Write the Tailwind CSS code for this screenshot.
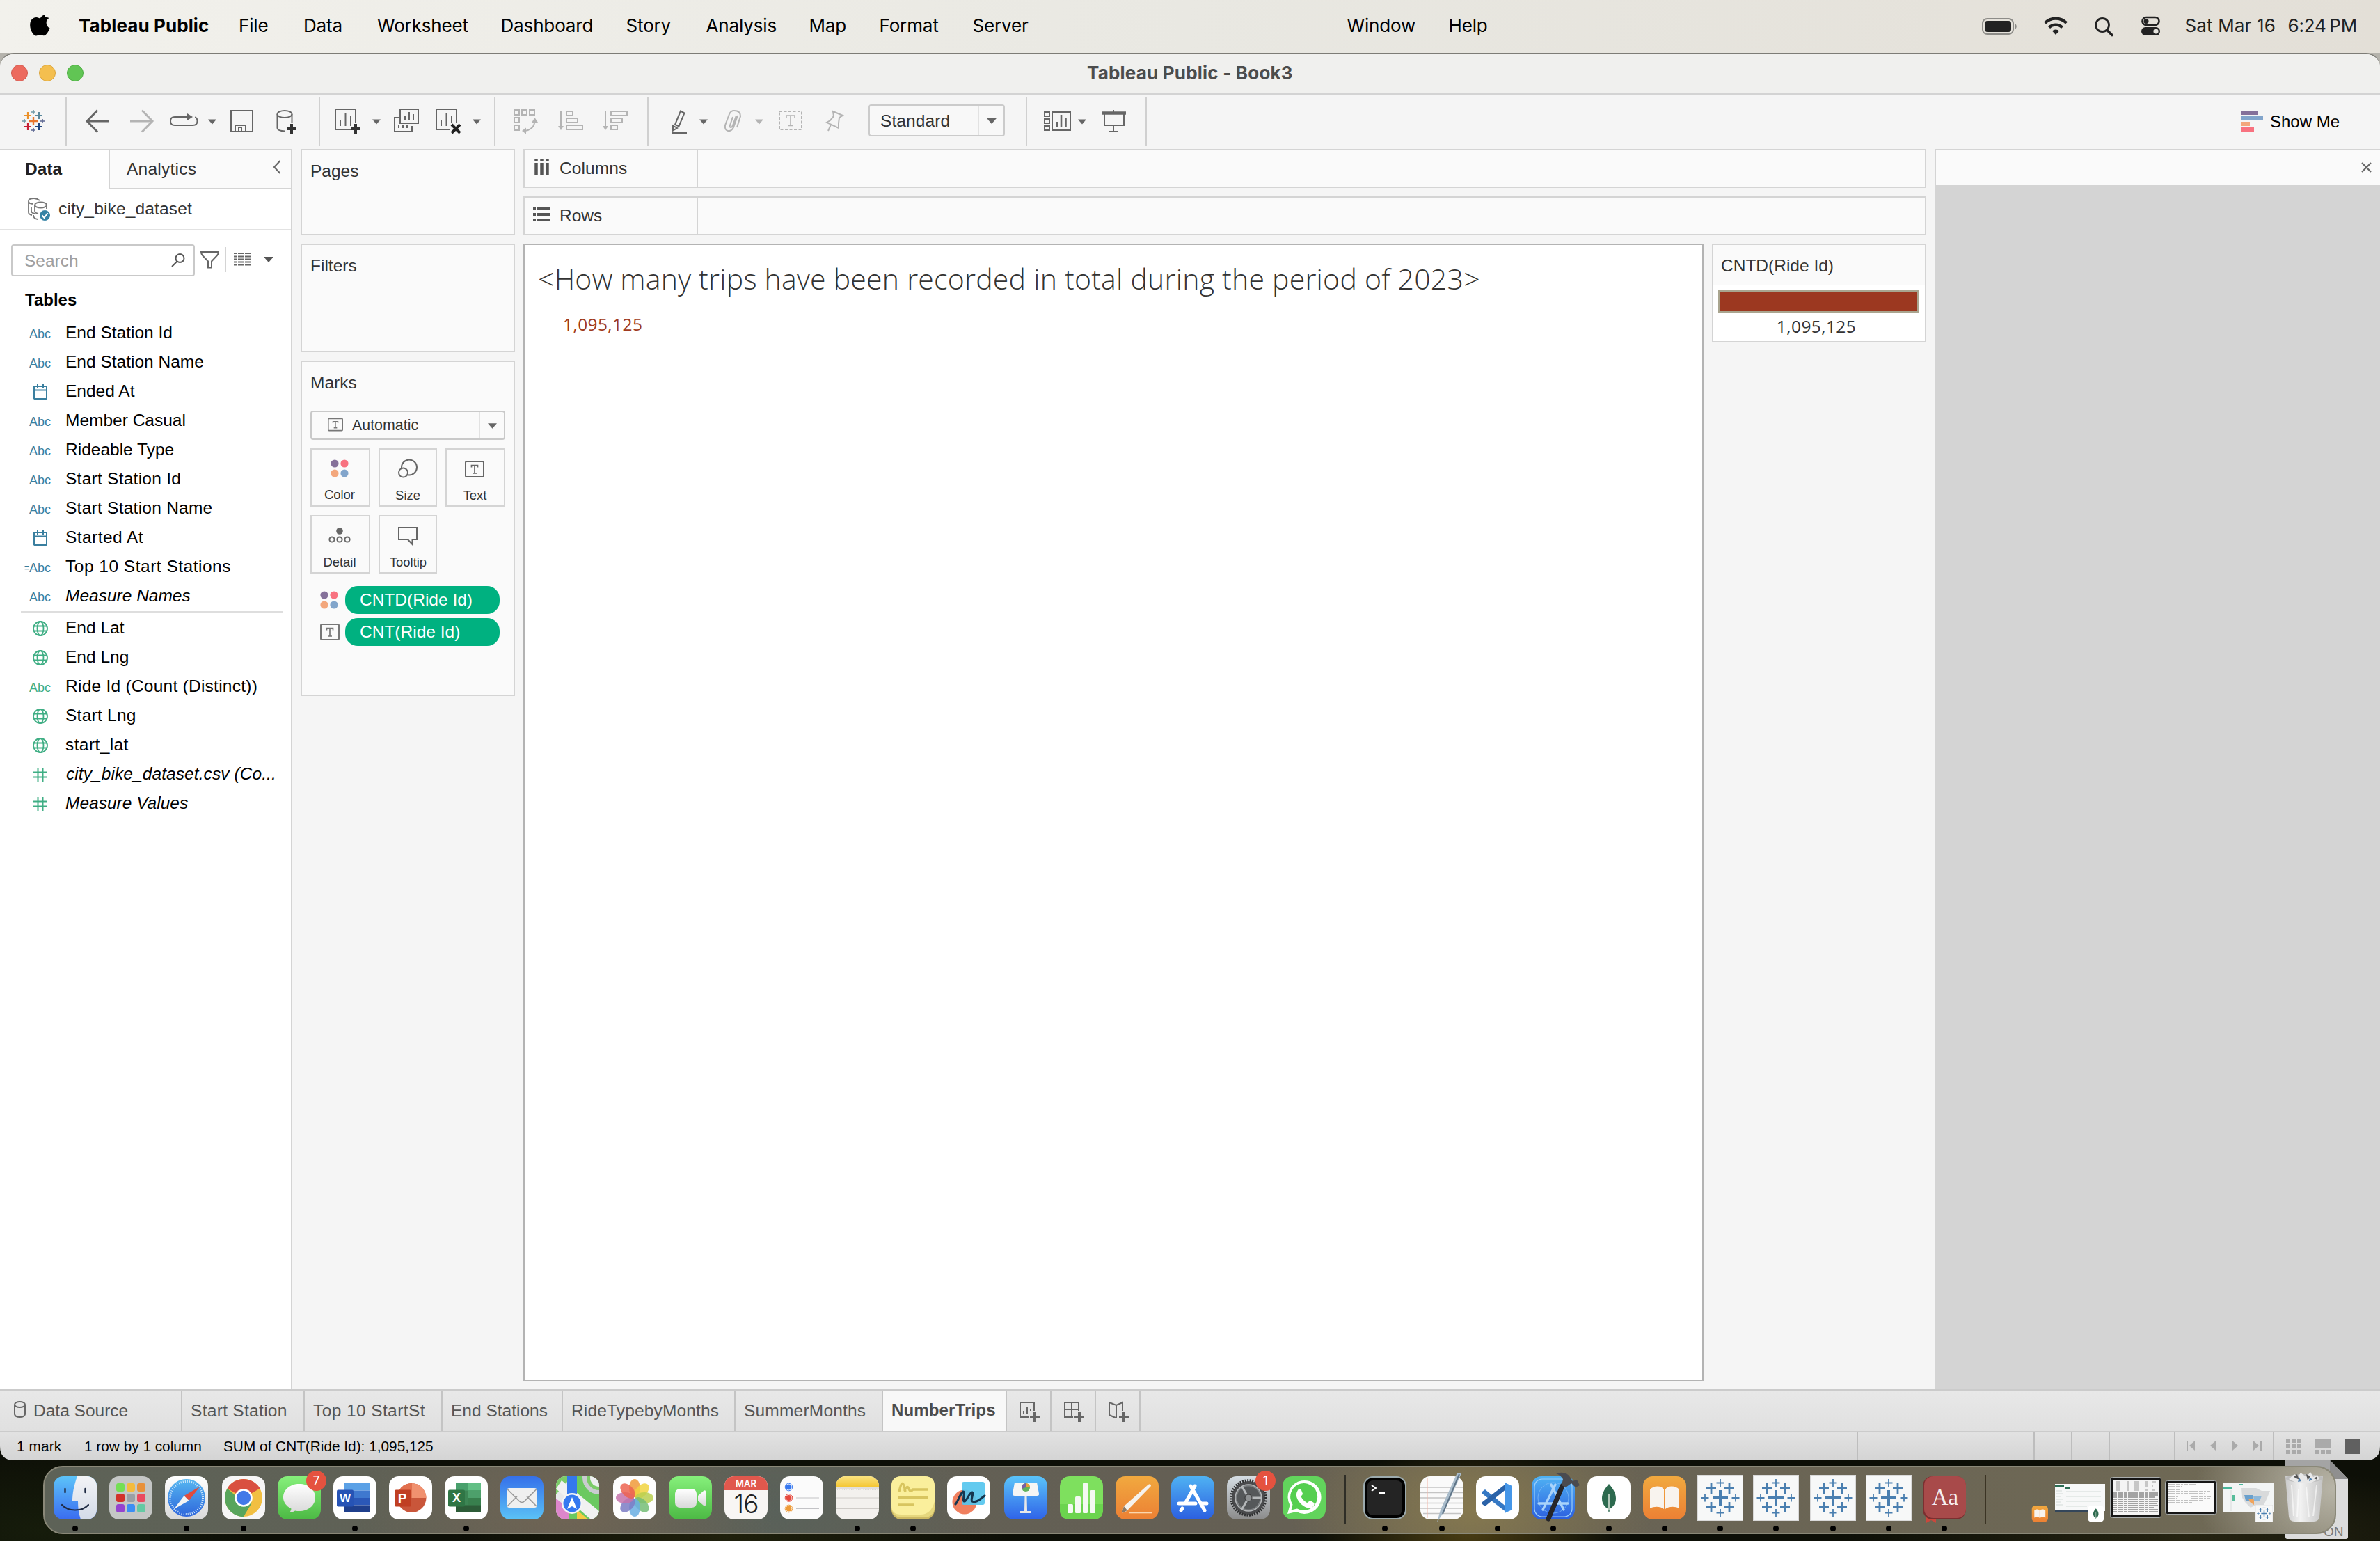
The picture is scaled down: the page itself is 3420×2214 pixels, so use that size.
<!DOCTYPE html>
<html lang="en">
<head>
<meta charset="utf-8">
<title>Tableau Public - Book3</title>
<script src="https://cdn.jsdelivr.net/npm/@tailwindcss/browser@4"></script>
</head>
<body class="w-[3420px] h-[2214px] overflow-hidden bg-[#0b0d06] font-['Liberation_Sans',sans-serif] text-[24.5px] text-[#333333]">

<!-- Shared symbols -->
<svg class="absolute w-0 h-0" aria-hidden="true">
  <defs>
    <linearGradient id="gFinder" x1="0" y1="0" x2="0" y2="1"><stop offset="0" stop-color="#5cc3f9"/><stop offset="1" stop-color="#3a6cf0"/></linearGradient>
    <linearGradient id="gFinder2" x1="0" y1="0" x2="0" y2="1"><stop offset="0" stop-color="#f2f3f6"/><stop offset="1" stop-color="#d3dbe8"/></linearGradient>
    <linearGradient id="gGreen" x1="0" y1="0" x2="0" y2="1"><stop offset="0" stop-color="#86f07b"/><stop offset="1" stop-color="#4cb944"/></linearGradient>
    <linearGradient id="gBlue" x1="0" y1="0" x2="0" y2="1"><stop offset="0" stop-color="#4fb2f3"/><stop offset="1" stop-color="#2c5fe0"/></linearGradient>
    <linearGradient id="gMail" x1="0" y1="0" x2="0" y2="1"><stop offset="0" stop-color="#3570ea"/><stop offset="1" stop-color="#5bc2f6"/></linearGradient>
    <linearGradient id="gKey" x1="0" y1="0" x2="0" y2="1"><stop offset="0" stop-color="#5ac4fa"/><stop offset="1" stop-color="#2f63e8"/></linearGradient>
    <linearGradient id="gOrange" x1="0" y1="0" x2="0" y2="1"><stop offset="0" stop-color="#f1a93f"/><stop offset="1" stop-color="#ec8034"/></linearGradient>
    <linearGradient id="gGrey" x1="0" y1="0" x2="0" y2="1"><stop offset="0" stop-color="#d5dde3"/><stop offset="1" stop-color="#8b8b8b"/></linearGradient>
    <linearGradient id="gWhite" x1="0" y1="0" x2="0" y2="1"><stop offset="0" stop-color="#ffffff"/><stop offset="1" stop-color="#d9d9d9"/></linearGradient>
    <linearGradient id="gSafari" x1="0" y1="0" x2="0" y2="1"><stop offset="0" stop-color="#55b6f0"/><stop offset="1" stop-color="#2e66dc"/></linearGradient>
    <linearGradient id="gYellow" x1="0" y1="0" x2="0" y2="1"><stop offset="0" stop-color="#fae380"/><stop offset="1" stop-color="#f4c52f"/></linearGradient>
    <linearGradient id="gTrash" x1="0" y1="0" x2="1" y2="0"><stop offset="0" stop-color="#c9c9c9"/><stop offset=".4" stop-color="#f2f2f2"/><stop offset="1" stop-color="#c4c4c4"/></linearGradient>
    <clipPath id="tile"><rect width="62" height="62" rx="14"/></clipPath>
  </defs>
  <symbol id="tri" viewBox="0 0 12 7"><path d="M0 0h12L6 7z" fill="currentColor"/></symbol>
  <symbol id="calendar" viewBox="0 0 22 22"><path d="M2 3h18v17.500a1 1 0 0 1-1 .5H3a1 1 0 0 1-1-.5zM2 8.500h18M7 0v6M15 0v6" fill="none" stroke="#3a7f9f" stroke-width="2"/></symbol>
  <symbol id="globe" viewBox="0 0 22 22"><g fill="none" stroke="#3fae84" stroke-width="1.800"><circle cx="11" cy="11" r="10"/><ellipse cx="11" cy="11" rx="4.500" ry="10"/><path d="M2 7.500h18M2 14.500h18"/></g></symbol>
  <symbol id="hash" viewBox="0 0 20 20"><path d="M6.500 0v20M13.500 0v20M0 6.500h20M0 13.500h20" fill="none" stroke="#3fae84" stroke-width="2"/></symbol>
  <symbol id="tbox" viewBox="0 0 28 24"><rect x="1" y="1" width="26" height="22" rx="1.500" fill="none" stroke="currentColor" stroke-width="2"/><path d="M9.500 9.500V6.500h9v3M14 6.500v11.500M11 18h6" fill="none" stroke="currentColor" stroke-width="1.700"/></symbol>
  <symbol id="dots4" viewBox="0 0 26 26"><circle cx="6" cy="6" r="5.600" fill="#85719a"/><circle cx="20" cy="6" r="5.600" fill="#f87280"/><circle cx="6" cy="20" r="5.600" fill="#f3a77c"/><circle cx="20" cy="20" r="5.600" fill="#82a5cb"/></symbol>
  <symbol id="tabtile" viewBox="0 0 66 66"><rect width="66" height="66" fill="#d9d9d9"/><rect x="1" y="1" width="64" height="64" fill="#f7f8f8"/>
    <g fill="none" stroke="#4a7fb0"><path d="M33 22v22M22 33h22" stroke-width="4"/><path d="M20 12v15M13 19.500h14M46 12v15M39 19.500h14M20 39v15M13 46.500h14M46 39v15M39 46.500h14" stroke-width="2.800"/><path d="M33 6v11M27.500 11.500h11M33 49v11M27.500 54.500h11M11 27.500v11M5.500 33h11M55 27.500v11M49.500 33h11" stroke-width="1.800"/></g></symbol>
  <symbol id="leaf" viewBox="0 0 62 62"><rect width="62" height="62" rx="14" fill="#fff"/><path d="M31 11c-8 9-10 15-10 21 0 7 4 12 9 15l.5 5h1l.5-5c5-3 9-8 9-15 0-6-2-12-10-21z" fill="#2d6a4f"/><path d="M31 25v24" stroke="#dfe8dd" stroke-width="1.500"/></symbol>
  <symbol id="books" viewBox="0 0 62 62"><rect width="62" height="62" rx="14" fill="url(#gOrange)"/><path d="M30 19c-3-6-15-6-20 0v27c6-3 15-3 20 1zM32 19c3-6 15-6 20 0v27c-6-3-15-3-20 1z" fill="#f8f3ee"/></symbol>
</svg>

<div class="flex flex-col w-[3420px] h-[2098px]">

  <!-- macOS menu bar -->
  <header class="flex h-[76px] shrink-0 items-center bg-linear-to-r from-[#f2f1ec] via-[#e9e8e2] to-[#e3dfd7] font-['Inter',sans-serif] text-[26px] tracking-[-0.15px] text-black leading-[72px] whitespace-nowrap">
    <svg class="w-[113px] h-[76px] shrink-0" viewBox="0 0 113 76"><path d="M66 26.800c-2.600 1.600-4 4-3.900 7 .1 3.400 2 6 5 7.400-.8 2.500-2 4.700-3.500 6.900-1.600 2.300-3 4-5.300 4-2.200 0-2.900-1.300-5.500-1.300s-3.400 1.300-5.500 1.400c-2.200.1-3.900-2.200-5.400-4.500-3.600-5.500-4.600-14.300-.9-18.600 1.900-2.300 4.300-3.400 6.700-3.400 2.500 0 4.100 1.400 5.500 1.400 1.400 0 3.600-1.600 6.500-1.500 2.400 0 4.900.5 6.300 1.200z" transform="translate(4.500 -.8)"/><path d="M64.500 21.500c.3 3.800-3 7.600-6.800 7.500-.5-3.700 3-7.300 6.800-7.500z"/></svg>
    <div class="w-[230px] pb-[3px] font-bold tracking-[0.1px]">Tableau Public</div>
    <div class="w-[93px] pb-[3px]">File</div>
    <div class="w-[106px] pb-[3px]">Data</div>
    <div class="w-[177.5px] pb-[3px]">Worksheet</div>
    <div class="w-[180px] pb-[3px]">Dashboard</div>
    <div class="w-[115px] pb-[3px]">Story</div>
    <div class="w-[148px] pb-[3px]">Analysis</div>
    <div class="w-[101px] pb-[3px]">Map</div>
    <div class="w-[134px] pb-[3px]">Format</div>
    <div class="w-[538px] pb-[3px]">Server</div>
    <div class="w-[146px] pb-[3px]">Window</div>
    <div class="w-[758px] pb-[3px]">Help</div>
    <svg class="w-[300px] h-[76px] shrink-0" viewBox="2840 0 300 76">
      <rect x="2849" y="27" width="44" height="22" rx="6.500" fill="none" stroke="#8d8c88" stroke-width="2"/><rect x="2852" y="30" width="38" height="16" rx="4" fill="#222"/><path d="M2896 34q3.500 4 0 8z" fill="#8d8c88"/>
      <g fill="none" stroke="#222" stroke-width="4.400"><path d="M2938.500 33a22 22 0 0 1 31 0M2944.500 39.500a13.500 13.500 0 0 1 19 0"/></g><path d="M2954 50l-5-5.500a7.200 7.200 0 0 1 10 0z" fill="#222"/>
      <circle cx="3021" cy="36" r="9.500" fill="none" stroke="#222" stroke-width="2.800"/><path d="M3028 43.500l7 7" stroke="#222" stroke-width="3.600" stroke-linecap="round"/>
      <rect x="3078.500" y="25" width="24" height="11" rx="5.500" fill="none" stroke="#222" stroke-width="2.600"/><circle cx="3084" cy="30.500" r="3.500" fill="#222"/><rect x="3077" y="39" width="27" height="12" rx="6" fill="#222"/><circle cx="3098" cy="45" r="3.600" fill="#e6e4de"/>
    </svg>
    <div class="w-[148px] pb-[3px] tracking-[0.15px] text-[#222]">Sat Mar 16</div>
    <div class="pb-[3px] text-[#222]">6:24&#8201;PM</div>
  </header>

  <!-- Application window -->
  <main class="flex flex-col h-[2022px] bg-[#b5b3ac]">
    <div class="flex flex-col h-[2022px] rounded-t-[20px] border-t-2 border-[#7d7c76] bg-[#f5f5f5] overflow-hidden">

      <div class="flex h-[58px] shrink-0 items-center border-b-2 border-[#d3d3d3] bg-[#f0f0ee]">
        <div class="flex w-[1562px] gap-4 pl-4 pb-0.5">
          <div class="size-6 rounded-full bg-[#ec6a5e] border border-[#d35b50]"></div>
          <div class="size-6 rounded-full bg-[#f4bf4f] border border-[#dba53d]"></div>
          <div class="size-6 rounded-full bg-[#61c554] border border-[#4fae43]"></div>
        </div>
        <h1 class="pb-0.5 font-['Inter',sans-serif] text-[26px] font-bold tracking-[0.2px] leading-[54px] text-[#4c4c4c]">Tableau Public - Book3</h1>
      </div>

      <!-- Toolbar -->
      <div class="flex h-[78px] shrink-0 items-center">
        <svg class="w-[94px] h-[78px]" viewBox="0 136 94 78" fill="none">
          <path d="M48 168v12M42 174h12" stroke="#e8762c" stroke-width="2.400"/>
          <path d="M40 161v10M35 166h10" stroke="#eb9129" stroke-width="2.200"/><path d="M56 161v10M51 166h10" stroke="#59879b" stroke-width="2.200"/>
          <path d="M40 177v10M35 182h10" stroke="#c72035" stroke-width="2.200"/><path d="M56 177v10M51 182h10" stroke="#1f447e" stroke-width="2.200"/>
          <path d="M48 158v6M45 161h6M35 171v6M32 174h6" stroke="#7099a6" stroke-width="1.600"/><path d="M61 171v6M58 174h6M48 184v6M45 187h6" stroke="#5b6591" stroke-width="1.600"/>
        </svg>
        <div class="w-0.5 h-[70px] bg-[#d0d0d0]"></div>
        <svg class="w-[362px] h-[78px]" viewBox="96 136 362 78" fill="none" stroke="#666" stroke-width="2">
          <path d="M140 158.500L125 174l15 15.500M125 174h32" stroke-width="3"/>
          <path d="M204 158.500L219 174l-15 15.500M219 174h-32" stroke="#b4b4b4" stroke-width="3"/>
          <path d="M268 168h-17q-6 0-6 6t6 6h26q6.500 0 6.500-6 0-5-3.500-5.500"/><path d="M269 163l8 5-8 5z" fill="#666" stroke="none"/>
          <path d="M299 171.500h12l-6 7z" fill="#666" stroke="none"/>
          <path d="M332 159h31v30h-31zM338 189v-9h15v9M343 189v-6h4v6"/>
          <ellipse cx="409" cy="164" rx="10.500" ry="5"/><path d="M398.500 164v20q0 4 11 4.500M419.500 164v12"/><path d="M419 178v14M412 185h14" stroke="#333" stroke-width="4"/>
        </svg>
        <div class="w-0.5 h-[70px] bg-[#d0d0d0]"></div>
        <svg class="w-[250px] h-[78px]" viewBox="460 136 250 78" fill="none" stroke="#666" stroke-width="2">
          <path d="M505 186h-23v-29h29v20M489 181v-8M496.500 181v-18M504 181v-14"/><path d="M511 178v14M504 185h14" stroke="#333" stroke-width="4"/>
          <path d="M535 171.500h12l-6 7z" fill="#666" stroke="none"/>
          <path d="M575 157h26v20h-26zM582 172v-5M588 172v-11M594 172v-8M574 169h-7v20h25v-8M573 184v-4M579 184v-4M585 184v-4"/>
          <path d="M647 186h-20v-29h29v19M634 181v-8M641.500 181v-18M649 176v-9"/><path d="M649 179l12 12M661 179l-12 12" stroke="#222" stroke-width="4"/>
          <path d="M679 171.500h12l-6 7z" fill="#666" stroke="none"/>
        </svg>
        <div class="w-0.5 h-[70px] bg-[#d0d0d0]"></div>
        <svg class="w-[218px] h-[78px]" viewBox="712 136 218 78" fill="none" stroke="#b4b4b4" stroke-width="2">
          <path d="M739 158h7v7h-7zM750 158h7v7h-7zM761 158h7v7h-7zM739 169h7v7h-7zM739 180h7v7h-7z"/><path d="M768.500 174q-1 12-14 14"/><path d="M768.500 169l4.500 7h-9zM750 188l6-4.500v9z" fill="#b4b4b4" stroke="none"/>
          <path d="M806 159v24M814 160h9v6h-9zM814 170h16v6h-16zM814 180h23v6h-23z"/><path d="M802 181h8l-4 6z" fill="#b4b4b4" stroke="none"/>
          <path d="M870 159v24M878 160h23v6h-23zM878 170h16v6h-16zM878 180h9v6h-9z"/><path d="M866 181h8l-4 6z" fill="#b4b4b4" stroke="none"/>
        </svg>
        <div class="w-0.5 h-[70px] bg-[#d0d0d0]"></div>
        <svg class="w-[316px] h-[78px]" viewBox="932 136 316 78" fill="none" stroke="#b4b4b4" stroke-width="2">
          <path d="M978 159.500l5.500 3-8 19-5.500-2.500zM967 180.500l6 3.500-6 3.500z" stroke="#666"/><path d="M965 190.500h22" stroke="#666" stroke-width="3"/>
          <path d="M1005 171.500h12l-6 7z" fill="#666" stroke="none"/>
          <path d="M1060 166l-6 17q-3 6-8 5t-4-8l6-16q2-5 7-5 9 0 9 8l-5 16M1053 168l-4 12q-1 3 1 3t3-3l5-14"/>
          <path d="M1085 171.500h12l-6 7z" fill="#b4b4b4" stroke="none"/>
          <path d="M1120 160h32v26h-32z" stroke-dasharray="4 2.500"/><path d="M1130 169v-3h12v3M1136 166v14M1132.500 180.500h7" stroke-width="1.600"/>
          <path d="M1197 160l14 6-5 3-1 8 0 7-17-8 5-3 5-6zM1194 179l-4 9"/>
        </svg>
        <div class="flex w-[196px] h-[46px] -mt-[4px] rounded-[4px] border-2 border-[#cbcbcb] bg-[#f8f8f8]">
          <div class="w-[157px] pl-[15px] leading-[43px] tracking-[0.1px] border-r-2 border-[#e2e2e2]">Standard</div>
          <div class="flex grow items-center justify-center text-[#666]"><svg class="w-3.5 h-2 mt-0.5"><use href="#tri" width="14" height="8"/></svg></div>
        </div>
        <div class="w-[30px]"></div>
        <div class="w-0.5 h-[70px] bg-[#d0d0d0]"></div>
        <svg class="w-[170px] h-[78px]" viewBox="1476 136 170 78" fill="none" stroke="#666" stroke-width="2">
          <path d="M1501 161h7v6h-7zM1501 171h7v6h-7zM1501 181h7v6h-7zM1512 161h26v26h-26z"/><path d="M1519 183v-8M1525 183v-18M1531.500 183v-13" stroke-width="2.600"/>
          <path d="M1549 171.500h12l-6 7z" fill="#666" stroke="none"/>
          <path d="M1583 162.500h35" stroke-width="4.500"/><path d="M1587 164v16h28v-16M1600 158v3M1600 180v8M1593 189h14"/>
        </svg>
        <div class="w-0.5 h-[70px] bg-[#d0d0d0]"></div>
        <div class="flex grow items-center justify-end gap-[10px] pr-[58px] text-black text-[24px]">
          <div class="flex flex-col gap-0.5 -mt-0.5">
            <div class="w-[25px] h-1.5 bg-[#85719a]"></div>
            <div class="w-8 h-1.5 bg-[#82a5cb]"></div>
            <div class="w-[13px] h-1.5 bg-[#f3a77c]"></div>
            <div class="w-[19px] h-1.5 bg-[#f87280]"></div>
          </div>
          <div class="leading-[34px]">Show Me</div>
        </div>
      </div>

      <!-- Workspace -->
      <div class="flex h-[1782px] shrink-0">

        <!-- Data pane -->
        <aside class="flex flex-col w-[420px] shrink-0 border-r-2 border-t-2 border-[#d4d4d4] bg-white whitespace-nowrap">
          <div class="flex h-[56px] shrink-0">
            <div class="w-[156px] pl-9 font-bold text-[#222] leading-[53px]">Data</div>
            <div class="flex grow items-center justify-between border-l-2 border-b-2 border-[#d4d4d4] bg-[#fafafa] pl-6 pr-[14px]">
              <div class="leading-[52px] tracking-[0.25px]">Analytics</div>
              <svg class="w-3 h-5 -mt-1.5" viewBox="0 0 12 20"><path d="M10.500 1L2 10l8.500 9" fill="none" stroke="#666" stroke-width="2"/></svg>
            </div>
          </div>
          <div class="flex h-[59px] shrink-0 items-center border-b-2 border-[#e2e2e2] pl-10">
            <svg class="w-[44px] h-9" viewBox="40 282 44 36" fill="none" stroke="#777" stroke-width="1.800"><path d="M57 287q-4-3-8-3-8 0-8 4v16q0 3 5 4M41 288q0 4 7 4"/><ellipse cx="58.500" cy="293.500" rx="8.500" ry="4"/><path d="M50 294v8q0 3 5 4M67 294v5M45 296v6q0 3 5 4M48 308q0 5 6 6"/><circle cx="64.500" cy="308.500" r="7.500" fill="#3683a5" stroke="none"/><path d="M60.500 308.500l3 3.500 5-7" stroke="#fff" stroke-width="2"/></svg>
            <div class="leading-[54px] pb-0.5 tracking-[0.15px]">city_bike_dataset</div>
          </div>
          <div class="flex h-[86px] shrink-0 items-center pl-4 pb-0">
            <div class="flex items-center justify-between w-[264px] h-[46px] rounded-[4px] border-2 border-[#c9c9c9] pl-[17px] pr-3">
              <div class="pt-0.5 text-[#a0a0a0]">Search</div>
              <svg class="w-5 h-5" viewBox="0 0 20 20" fill="none" stroke="#555" stroke-width="2"><circle cx="12.500" cy="7" r="6"/><path d="M8.500 11.500L1 19"/></svg>
            </div>
            <svg class="w-[120px] h-[46px]" viewBox="280 352 120 46" fill="none" stroke="#666" stroke-width="2"><path d="M289 363h25q0 3-2 5l-8 8.500v9h-5v-9l-8-8.500q-2-2-2-5z"/><path d="M324 356v36" stroke="#d4d4d4"/><path d="M336 365h24M336 369.500h24M336 373.500h24M336 377.500h24M336 381.500h24" stroke-dasharray="4 2 8 2 8 2"/><path d="M379 370h14l-7 8z" fill="#555" stroke="none"/></svg>
          </div>
          <div class="h-[39px] shrink-0 pl-9 font-bold text-[24px] text-black leading-[28px]">Tables</div>

          <ul class="text-black leading-[44px]">
            <li class="flex h-[42px]"><span class="w-[94px] pl-[42px] text-[18px] text-[#3a7f9f] pt-[2px]">Abc</span>End Station Id</li>
            <li class="flex h-[42px]"><span class="w-[94px] pl-[42px] text-[18px] text-[#3a7f9f] pt-[2px]">Abc</span>End Station Name</li>
            <li class="flex h-[42px]"><span class="flex items-center w-[94px] pl-[47px]"><svg class="size-[22px] mt-1"><use href="#calendar" width="22" height="22"/></svg></span>Ended At</li>
            <li class="flex h-[42px]"><span class="w-[94px] pl-[42px] text-[18px] text-[#3a7f9f] pt-[2px]">Abc</span>Member Casual</li>
            <li class="flex h-[42px]"><span class="w-[94px] pl-[42px] text-[18px] text-[#3a7f9f] pt-[2px]">Abc</span>Rideable Type</li>
            <li class="flex h-[42px] tracking-[0.1px]"><span class="w-[94px] pl-[42px] text-[18px] text-[#3a7f9f] pt-[2px] tracking-normal">Abc</span><span class="tracking-[0.25px]">Start Station Id</span></li>
            <li class="flex h-[42px]"><span class="w-[94px] pl-[42px] text-[18px] text-[#3a7f9f] pt-[2px]">Abc</span><span class="tracking-[0.25px]">Start Station Name</span></li>
            <li class="flex h-[42px]"><span class="flex items-center w-[94px] pl-[47px]"><svg class="size-[22px] mt-1"><use href="#calendar" width="22" height="22"/></svg></span><span class="tracking-[0.45px]">Started At</span></li>
            <li class="flex h-[42px]"><span class="flex w-[94px] pl-[35px] text-[18px] text-[#3a7f9f] pt-[2px]"><span class="w-[7px] text-[12px] font-bold">=</span>Abc</span><span class="tracking-[0.5px]">Top 10 Start Stations</span></li>
            <li class="flex h-[42px] italic"><span class="w-[94px] pl-[42px] text-[18px] not-italic text-[#3a7f9f] pt-[2px]">Abc</span>Measure Names</li>
          </ul>
          <div class="h-0.5 shrink-0 ml-[30px] mr-3 mt-0.5 bg-[#dedede]"></div>
          <ul class="text-black leading-[44px]">
            <li class="flex h-[42px]"><span class="flex items-center w-[94px] pl-[47px]"><svg class="size-[22px] mt-1"><use href="#globe" width="22" height="22"/></svg></span>End Lat</li>
            <li class="flex h-[42px]"><span class="flex items-center w-[94px] pl-[47px]"><svg class="size-[22px] mt-1"><use href="#globe" width="22" height="22"/></svg></span>End Lng</li>
            <li class="flex h-[42px]"><span class="w-[94px] pl-[42px] text-[18px] text-[#3fae84] pt-[2px]">Abc</span><span class="tracking-[0.25px]">Ride Id (Count (Distinct))</span></li>
            <li class="flex h-[42px]"><span class="flex items-center w-[94px] pl-[47px]"><svg class="size-[22px] mt-1"><use href="#globe" width="22" height="22"/></svg></span><span class="tracking-[0.25px]">Start Lng</span></li>
            <li class="flex h-[42px]"><span class="flex items-center w-[94px] pl-[47px]"><svg class="size-[22px] mt-1"><use href="#globe" width="22" height="22"/></svg></span><span class="tracking-[0.4px]">start_lat</span></li>
            <li class="flex h-[42px] italic"><span class="flex items-center w-[94px] pl-[48px]"><svg class="size-5 mt-1"><use href="#hash" width="20" height="20"/></svg></span><span class="pl-px tracking-[0.08px]">city_bike_dataset.csv (Co...</span></li>
            <li class="flex h-[42px] italic"><span class="flex items-center w-[94px] pl-[48px]"><svg class="size-5 mt-1"><use href="#hash" width="20" height="20"/></svg></span>Measure Values</li>
          </ul>
        </aside>

        <!-- Cards -->
        <section class="flex flex-col gap-3 w-[332px] shrink-0 px-3">
          <div class="h-[124px] shrink-0 border-2 border-[#d4d4d4] bg-[#fafafa] pl-3 leading-[60px]">Pages</div>
          <div class="h-[156px] shrink-0 border-2 border-[#d4d4d4] bg-[#fafafa] pl-3 leading-[60px]">Filters</div>
          <div class="flex flex-col h-[482px] shrink-0 border-2 border-[#d4d4d4] bg-[#fafafa] pl-3 pr-3">
            <div class="h-[70px] leading-[60px]">Marks</div>
            <div class="flex h-[42px] rounded-[4px] border-2 border-[#c9c9c9] text-[21.4px]">
              <div class="flex items-center w-[242px] pl-[23px] gap-[13px] border-r-2 border-[#e2e2e2] text-[#777]">
                <svg class="w-[22px] h-5 -mt-0.5"><use href="#tbox" width="22" height="20"/></svg>
                <span class="text-[#333] leading-[38px]">Automatic</span>
              </div>
              <div class="flex grow items-center justify-center text-[#666]"><svg class="w-[13px] h-2 mt-0.5"><use href="#tri" width="13" height="8"/></svg></div>
            </div>
            <div class="grid grid-cols-[86px_84px_86px] grid-rows-[84px_84px] gap-3 mt-3 text-[18.4px] text-[#333] text-center">
              <div class="flex flex-col items-center border-2 border-[#d4d4d4] pt-[14px]"><svg class="size-[26px] -ml-0.5"><use href="#dots4" width="26" height="26"/></svg><span class="leading-[24px] mt-[13px] -ml-0.5">Color</span></div>
              <div class="flex flex-col items-center border-2 border-[#d4d4d4] pt-[13px]"><svg class="w-7 h-7 -ml-px" viewBox="0 0 28 28" fill="none" stroke="#666" stroke-width="2"><circle cx="16" cy="12.500" r="11"/><circle cx="7.500" cy="20" r="6.500" fill="#fafafa"/></svg><span class="leading-[24px] mt-[13px]">Size</span></div>
              <div class="flex flex-col items-center border-2 border-[#d4d4d4] pt-4 text-[#666]"><svg class="w-7 h-6 -ml-0.5"><use href="#tbox" width="28" height="24"/></svg><span class="leading-[24px] mt-[14px] -ml-px text-[#333]">Text</span></div>
              <div class="flex flex-col items-center border-2 border-[#d4d4d4] pt-[14px]"><svg class="w-8 h-[26px] -ml-0.5" viewBox="0 0 32 26" fill="none" stroke="#666" stroke-width="2"><circle cx="16" cy="7" r="4.800" fill="#666" stroke="none"/><circle cx="5" cy="19" r="3.600"/><circle cx="16" cy="19" r="3.600"/><circle cx="27" cy="19" r="3.600"/></svg><span class="leading-[24px] mt-[14px] -ml-0.5">Detail</span></div>
              <div class="flex flex-col items-center border-2 border-[#d4d4d4] pt-[14px]"><svg class="w-7 h-7" viewBox="0 0 28 28" fill="none" stroke="#666" stroke-width="2"><path d="M1 2h26v17h-6.500v7l-6.500-7H1z"/></svg><span class="leading-[24px] mt-[12px] ml-px">Tooltip</span></div>
            </div>
            <div class="flex flex-col gap-1.5 mt-[18px] text-[#777]">
              <div class="flex items-center h-10 pl-[14px]"><svg class="size-[26px] mr-[10px]"><use href="#dots4" width="26" height="26"/></svg><div class="w-[222px] h-10 rounded-[18px] bg-[#00b180] pl-[21px] leading-[39px] text-white">CNTD(Ride Id)</div></div>
              <div class="flex items-center h-10 pl-[14px]"><svg class="w-7 h-6 mr-2"><use href="#tbox" width="28" height="24"/></svg><div class="w-[222px] h-10 rounded-[18px] bg-[#00b180] pl-[21px] leading-[39px] text-white">CNT(Ride Id)</div></div>
            </div>
          </div>
        </section>

        <!-- Shelves and view -->
        <section class="flex flex-col gap-3 w-[2028px] shrink-0 pr-3">
          <div class="flex items-center h-14 shrink-0 border-2 border-[#d4d4d4] bg-[#fafafa]">
            <div class="flex items-center w-[249px] h-full border-r-2 border-[#d4d4d4] pl-3.5">
              <svg class="w-9 h-6 -mt-1" viewBox="0 0 36 24" fill="none" stroke="#555" stroke-width="4.500"><path d="M2.500 0v4M10.500 0v4M18.500 0v4M2.500 6v18M10.500 6v18M18.500 6v18"/></svg>
              <span class="leading-[52px] pb-px tracking-[0.1px]">Columns</span>
            </div>
          </div>
          <div class="flex items-center h-14 shrink-0 border-2 border-[#d4d4d4] bg-[#fafafa]">
            <div class="flex items-center w-[249px] h-full border-r-2 border-[#d4d4d4] pl-3">
              <svg class="w-[38px] h-5 -mt-1" viewBox="0 0 38 20" fill="none" stroke="#555" stroke-width="4"><path d="M0 2h4M0 10h4M0 18h4M6 2h18M6 10h18M6 18h18"/></svg>
              <span class="leading-[52px] pb-px">Rows</span>
            </div>
          </div>
          <div class="flex gap-3 items-start">
            <div class="w-[1696px] h-[1634px] border-2 border-[#b3b3b3] bg-white pl-[19px] pt-[19px]">
              <h2 class="font-['Open_Sans','Noto_Sans',sans-serif] font-light text-[41px] leading-[58px] tracking-[0.23px] whitespace-nowrap">&lt;How many trips have been recorded in total during the period of 2023&gt;</h2>
              <p class="pl-[36px] mt-[22px] font-['Open_Sans','Noto_Sans',sans-serif] text-[24.5px] leading-[30px] tracking-[0.4px] text-[#a03a20]">1,095,125</p>
            </div>
            <div class="w-[308px] h-[142px] border-2 border-[#d4d4d4] bg-white">
              <div class="h-[58px] bg-[#fafafa] pl-[11px] leading-[59px]">CNTD(Ride Id)</div>
              <div class="h-8 mt-[7px] ml-[7px] mr-[9px] border-2 border-[#a9a58f] bg-[#9c3820]"></div>
              <p class="mt-1 pr-2 text-center font-['Open_Sans','Noto_Sans',sans-serif] text-[24.5px] leading-[32px] tracking-[0.4px]">1,095,125</p>
            </div>
          </div>
        </section>

        <!-- Show Me pane -->
        <section class="flex flex-col grow border-t-2 border-l-2 border-[#d4d4d4] bg-[#d4d4d4]">
          <div class="flex items-center justify-end h-[50px] bg-[#fafafa] pr-3">
            <svg class="size-[15px] -mt-0.5" viewBox="0 0 15 15"><path d="M1 1l13 13M14 1L1 14" stroke="#666" stroke-width="2.200"/></svg>
          </div>
        </section>
      </div>

      <!-- Sheet tabs -->
      <nav class="flex h-[62px] shrink-0 border-t-2 border-b-2 border-[#cbcbcb] bg-linear-to-b from-[#e8e8e8] to-[#e0e0e0] text-[#555] leading-[58px] whitespace-nowrap">
        <div class="flex items-center w-[262px] border-r-2 border-[#c4c4c4] pl-5"><svg class="w-7 h-6 -mt-1" viewBox="0 0 28 24" fill="none" stroke="#666" stroke-width="2"><ellipse cx="8.500" cy="5" rx="7.500" ry="4"/><path d="M1 5v13q0 5 7.500 5t7.500-5V5"/></svg>Data Source</div>
        <div class="w-[176px] border-r-2 border-[#c4c4c4] pl-3 tracking-[0.3px]">Start Station</div>
        <div class="w-[198px] border-r-2 border-[#c4c4c4] pl-3 tracking-[0.4px]">Top 10 StartSt</div>
        <div class="w-[173px] border-r-2 border-[#c4c4c4] pl-3">End Stations</div>
        <div class="w-[248px] border-r-2 border-[#c4c4c4] pl-3 tracking-[0.15px]">RideTypebyMonths</div>
        <div class="w-[212px] border-r-2 border-[#c4c4c4] pl-3 tracking-[0.2px]">SummerMonths</div>
        <div class="w-[178px] border-r-2 border-[#c4c4c4] bg-[#f8f8f8] pl-3 font-bold text-[24px] leading-[56px] tracking-[0.15px] text-[#4c4c4c]">NumberTrips</div>
        <div class="w-[64px] border-r-2 border-[#c4c4c4] pl-[17px] pt-[15px]"><svg class="w-8 h-8" viewBox="0 0 32 32" fill="none" stroke="#666" stroke-width="2"><path d="M14 23H2V2h20v12M7 18v-4M12 18V8M17 14v-3"/><path d="M23 16v14M16 23h14" stroke-width="4"/></svg></div>
        <div class="w-[64px] border-r-2 border-[#c4c4c4] pl-[17px] pt-[15px]"><svg class="w-8 h-8" viewBox="0 0 32 32" fill="none" stroke="#666" stroke-width="2"><path d="M14 23H2V2h20v12M2 12h20M12 2v21"/><path d="M23 16v14M16 23h14" stroke-width="4"/></svg></div>
        <div class="w-[64px] border-r-2 border-[#c4c4c4] pl-[17px] pt-[15px]"><svg class="w-8 h-8" viewBox="0 0 32 32" fill="none" stroke="#666" stroke-width="2"><path d="M11 24l-9-4V2l10 4 9-4v12M12 6v18"/><path d="M23 16v14M16 23h14" stroke-width="4"/></svg></div>
      </nav>

      <!-- Status bar -->
      <footer class="flex h-10 shrink-0 bg-linear-to-b from-[#e2e2e2] to-[#d4d4d4] text-[20.8px] text-black leading-[39px] whitespace-nowrap">
        <div class="w-[121px] pl-6 tracking-[0.1px]">1 mark</div>
        <div class="w-[200px]">1 row by 1 column</div>
        <div class="w-[2347px]">SUM of CNT(Ride Id): 1,095,125</div>
        <div class="w-[254px] border-l-2 border-[#bdbdbd]"></div>
        <div class="w-[54px] border-l-2 border-[#bdbdbd]"></div>
        <div class="w-[54px] border-l-2 border-[#bdbdbd]"></div>
        <div class="w-[94px] border-l-2 border-[#bdbdbd]"></div>
        <div class="w-[142px] border-l-2 border-[#bdbdbd]"><svg class="w-[140px] h-10" viewBox="3126 2058 140 40" fill="#aaa"><path d="M3142 2070h2v14h-2zM3154 2070v14l-8-7zM3184 2070v14l-8-7zM3208 2070v14l8-7zM3238 2070v14l8-7zM3248 2070h2v14h-2z"/></svg></div>
        <div class="grow border-l-2 border-[#bdbdbd]"><svg class="w-[150px] h-10" viewBox="3268 2058 150 40" fill="#aaa"><path d="M3285 2067h6v6h-6zM3293 2067h6v6h-6zM3301 2067h6v6h-6zM3285 2075h6v6h-6zM3293 2075h6v6h-6zM3301 2075h6v6h-6zM3285 2083h6v6h-6zM3293 2083h6v6h-6zM3301 2083h6v6h-6zM3327 2067h22v14h-22zM3327 2083h6v6h-6zM3335 2083h6v6h-6zM3343 2083h6v6h-6z"/><path d="M3369 2067h22v22h-22z" fill="#606060"/></svg></div>
      </footer>
    </div>
  </main>
</div>

<!-- Desktop strip with rounded window corners above it -->
<div class="relative w-[3420px] h-[116px] bg-[#0d0f07] bg-[radial-gradient(ellipse_220px_120px_at_2110px_100px,#4a3d14,transparent),radial-gradient(ellipse_400px_90px_at_1050px_110px,#1f200c,transparent),radial-gradient(ellipse_500px_100px_at_3150px_110px,#262412,transparent),radial-gradient(ellipse_300px_120px_at_60px_100px,#161c0b,transparent)]">
  <svg class="absolute left-0 -top-[20px] w-5 h-5" viewBox="0 0 20 20"><path d="M0 0q0 20 20 20H0z" fill="#0b0d06"/></svg>
  <svg class="absolute right-0 -top-[20px] w-5 h-5" viewBox="0 0 20 20"><path d="M20 0q0 20-20 20h20z" fill="#0b0d06"/></svg>
  <!-- desktop file -->
  <svg class="absolute left-[3284px] top-0 w-[92px] h-[114px]" viewBox="0 0 92 114"><path d="M0 0h64l26 27v83q0 3-3 3H3q-3 0-3-3z" fill="#dcdcdc"/><path d="M0 0h64v27H0z" fill="#a4a4a4"/><path d="M64 0l26 27H64z" fill="#8f8f8f"/></svg>
  <div class="absolute left-[3339px] top-[94px] text-[19px] leading-[18px] text-[#777]">ON</div>

  <!-- Dock -->
  <div class="absolute left-[62px] top-[8px] flex w-[3295px] h-[98px] rounded-[28px] border-2 border-[#8a8878] bg-linear-to-r from-[#5d6257] from-0% via-[#645f54] via-50% to-[#706a55] to-100% overflow-visible">
    <div class="absolute inset-0 rounded-[26px] bg-[radial-gradient(ellipse_260px_160px_at_2050px_60px,#85784f,transparent),radial-gradient(ellipse_200px_160px_at_3290px_30px,#b8b5a8,transparent),radial-gradient(ellipse_300px_160px_at_750px_60px,#6f6454,transparent),radial-gradient(ellipse_300px_160px_at_1050px_60px,#59615a,transparent)]"></div>
    <div class="relative flex items-start pt-[13px] pl-[13px] gap-[18px] [&>*]:shrink-0">
      <!-- Finder -->
      <svg class="size-[62px]" viewBox="0 0 62 62"><g clip-path="url(#tile)"><rect width="62" height="62" fill="url(#gFinder)"/><path d="M34 0c-5 14-7 25-7 36h8c0 9 1 18 4 26h23V0z" fill="url(#gFinder2)"/></g><path d="M16.500 18v5M45.500 18v5" stroke="#1f2b44" stroke-width="2.400" stroke-linecap="round"/><path d="M12 41c9 10 29 10 38 0" fill="none" stroke="#1f2b44" stroke-width="2.200" stroke-linecap="round"/></svg>
      <!-- Launchpad -->
      <svg class="size-[62px]" viewBox="0 0 62 62"><rect width="62" height="62" rx="14" fill="#c4c6c5"/><g><rect x="10" y="10" width="12" height="12" rx="3" fill="#74df54"/><rect x="25" y="10" width="12" height="12" rx="3" fill="#f4bb3d"/><rect x="40" y="10" width="12" height="12" rx="3" fill="#e8913a"/><rect x="10" y="25" width="12" height="12" rx="3" fill="#d2322a"/><rect x="25" y="25" width="12" height="12" rx="3" fill="#9a9fa5"/><rect x="40" y="25" width="12" height="12" rx="3" fill="#ea4a60"/><rect x="10" y="40" width="12" height="12" rx="3" fill="#9543cf"/><rect x="25" y="40" width="12" height="12" rx="3" fill="#3c8ef4"/><rect x="40" y="40" width="12" height="12" rx="3" fill="#64c9a3"/></g></svg>
      <!-- Safari -->
      <svg class="size-[62px]" viewBox="0 0 62 62"><rect width="62" height="62" rx="14" fill="url(#gWhite)"/><circle cx="31" cy="31" r="27" fill="url(#gSafari)"/><circle cx="31" cy="31" r="23.500" fill="none" stroke="#d9ecfb" stroke-width="3" stroke-dasharray="1 2.080"/><path d="M50 15L27.500 28l7 7z" fill="#e14b3b"/><path d="M13 47l14.500-19 7 7z" fill="#f4f4f4"/></svg>
      <!-- Chrome -->
      <svg class="size-[62px] ml-0.5" viewBox="0 0 62 62"><rect width="62" height="62" rx="14" fill="#f6f6f6"/><circle cx="31" cy="31" r="27" fill="#f1bf42"/><path d="M31 31L7.600 17.500a27 27 0 0 1 46.800 0z" fill="#d95040"/><path d="M31 31h-8L7.600 17.500A27 27 0 0 0 31 58l12-20z" fill="#58a55c"/><path d="M31 18h23.500a27 27 0 0 0-3-4.500L31 15z" fill="#d95040"/><circle cx="31" cy="31" r="12.800" fill="#fff"/><circle cx="31" cy="31" r="10.200" fill="#4379e8"/></svg>
      <!-- Messages -->
      <div class="relative size-[62px]"><svg class="size-[62px]" viewBox="0 0 62 62"><rect width="62" height="62" rx="14" fill="url(#gGreen)"/><path d="M31 11c13 0 23 8 23 19.500S44 50 31 50c-2 0-4 0-6-.6-2 1.400-5 2.400-8 2.600 1.500-1.700 2.400-3.500 2.500-5.500C12.500 43 8 37 8 30.500 8 19 18 11 31 11z" fill="url(#gWhite)"/></svg>
        <div class="absolute -right-[8px] -top-[8px] w-[29px] h-[29px] rounded-full bg-[#e5523f] text-center text-[18px] leading-[29px] text-white font-['Inter',sans-serif]">7</div></div>
      <!-- Word -->
      <div class="relative size-[62px] rounded-[14px] bg-white"><svg class="size-[62px]" viewBox="0 0 62 62"><path d="M16 10h36v10.500H16z" fill="#5ba1e6"/><path d="M16 20.500h36V31H16z" fill="#3f78cf"/><path d="M16 31h36v10.500H16z" fill="#2b58b8"/><path d="M16 41.500h36V52H16z" fill="#1f3f8c"/><rect x="5" y="19.500" width="24" height="24" rx="2" fill="#2653b5"/></svg><div class="absolute left-[5px] top-[20px] w-6 text-center text-[17px] leading-[23px] font-bold text-white">W</div></div>
      <!-- PowerPoint -->
      <div class="relative size-[62px] rounded-[14px] bg-white"><svg class="size-[62px]" viewBox="0 0 62 62"><circle cx="32.500" cy="31" r="21" fill="#c9563a"/><path d="M32.500 10v21h21a21 21 0 0 0-21-21z" fill="#f0916f"/><path d="M32.500 10a21 21 0 0 0-21 21h21z" fill="#e2704e"/><rect x="8" y="19.500" width="24" height="24" rx="2" fill="#c03f22"/></svg><div class="absolute left-[7px] top-[20px] w-6 text-center text-[19px] leading-[23px] font-bold text-white">P</div></div>
      <!-- Excel -->
      <div class="relative size-[62px] rounded-[14px] bg-white"><svg class="size-[62px]" viewBox="0 0 62 62"><path d="M16 10h36v42H16z" fill="#3c8554"/><path d="M34 10h18v10.500H34z" fill="#62bf85"/><path d="M16 10h18v10.500H16z" fill="#48a06c"/><path d="M34 20.500h18V31H34z" fill="#4da06b"/><path d="M34 31h18v10.500H34z" fill="#387f4d"/><path d="M16 41.500h36V52H16z" fill="#2d5c38"/><rect x="5" y="19.500" width="24" height="24" rx="2" fill="#2f7545"/></svg><div class="absolute left-[5px] top-[20px] w-6 text-center text-[18px] leading-[23px] font-bold text-white">X</div></div>
      <!-- Mail -->
      <svg class="size-[62px]" viewBox="0 0 62 62"><rect width="62" height="62" rx="14" fill="url(#gMail)"/><rect x="9" y="17" width="44" height="28" rx="4" fill="#f0f0f0"/><path d="M10 43l14-14M52 43L38 29M10 18.500l17 17q4 4 8 0l17-17" fill="none" stroke="#9b9b9b" stroke-width="1.600"/></svg>
      <!-- Maps -->
      <svg class="size-[62px]" viewBox="0 0 62 62"><g clip-path="url(#tile)"><rect width="62" height="62" fill="#6bc960"/><path d="M0 0h16v62H0z" fill="#e8e8ea"/><path d="M0 0h16v8L0 26z" fill="#7ccb68"/><path d="M0 32l18 14v16H0z" fill="#dd86cc"/><path d="M0 18l50 44h12V50L8 6z" fill="#f1f1f1"/><path d="M30 62V48l16 14z" fill="#f5cb42"/><path d="M16 0h14v40H16z" fill="#3578ec"/><circle cx="62" cy="2" r="24" fill="#c9ccd0"/><circle cx="62" cy="2" r="18" fill="#7ccb68"/><circle cx="62" cy="2" r="13" fill="#eeeef0"/></g><circle cx="23" cy="39" r="15" fill="#f4f4f4"/><circle cx="23" cy="39" r="12.500" fill="#3478f0"/><path d="M23 30l7 17-7-4-7 4z" fill="#fff"/></svg>
      <!-- Photos -->
      <svg class="size-[62px] ml-0.5" viewBox="0 0 62 62"><rect width="62" height="62" rx="14" fill="#fdfdfd"/><g fill-opacity=".85"><ellipse cx="31" cy="17" rx="8" ry="13" fill="#f09a38"/><ellipse cx="31" cy="17" rx="8" ry="13" fill="#f1d33f" transform="rotate(45 31 31)"/><ellipse cx="31" cy="17" rx="8" ry="13" fill="#b8cf4f" transform="rotate(90 31 31)"/><ellipse cx="31" cy="17" rx="8" ry="13" fill="#74bd76" transform="rotate(135 31 31)"/><ellipse cx="31" cy="17" rx="8" ry="13" fill="#6aaee2" transform="rotate(180 31 31)"/><ellipse cx="31" cy="17" rx="8" ry="13" fill="#7b7bc4" transform="rotate(225 31 31)"/><ellipse cx="31" cy="17" rx="8" ry="13" fill="#c573ab" transform="rotate(270 31 31)"/><ellipse cx="31" cy="17" rx="8" ry="13" fill="#ec6350" transform="rotate(315 31 31)"/></g></svg>
      <!-- FaceTime -->
      <svg class="size-[62px]" viewBox="0 0 62 62"><rect width="62" height="62" rx="14" fill="url(#gGreen)"/><rect x="9" y="18" width="31" height="27" rx="7" fill="url(#gWhite)"/><path d="M42 28l8-7q3-2 3 1v19q0 3-3 1l-8-7z" fill="url(#gWhite)"/></svg>
      <!-- Calendar -->
      <div class="flex flex-col size-[62px] rounded-[14px] overflow-hidden bg-[#f8f6f4] text-center font-['Inter',sans-serif]"><div class="h-[20px] bg-[#e0584d] text-[13px] font-semibold leading-[21px] text-white">MAR</div><div class="text-[37px] leading-[39px] font-light tracking-[-1px] text-[#222]">16</div></div>
      <!-- Reminders -->
      <svg class="size-[62px]" viewBox="0 0 62 62"><rect width="62" height="62" rx="14" fill="#fbfbfb"/><path d="M23 15.500h33M23 31h33M23 46.500h33" stroke="#c3c3c6" stroke-width="1.200"/><circle cx="12.500" cy="15.500" r="4" fill="#3577f0"/><circle cx="12.500" cy="31" r="4" fill="#e6483d"/><circle cx="12.500" cy="46.500" r="4" fill="#ee9b38"/><g fill="none" stroke-width="1"><circle cx="12.500" cy="15.500" r="5.300" stroke="#3577f0"/><circle cx="12.500" cy="31" r="5.300" stroke="#e6483d"/><circle cx="12.500" cy="46.500" r="5.300" stroke="#ee9b38"/></g></svg>
      <!-- Notes -->
      <svg class="size-[62px]" viewBox="0 0 62 62"><g clip-path="url(#tile)"><rect width="62" height="62" fill="#f3f1ee"/><rect width="62" height="16" fill="url(#gYellow)"/></g><path d="M0 17h62M0 31h62M0 46.500h62" stroke="#cfccc8" stroke-width="1"/><path d="M2 19h58" stroke="#bbb" stroke-dasharray="1 1.500"/></svg>
      <!-- Stickies -->
      <svg class="size-[62px]" viewBox="0 0 62 62"><rect width="62" height="62" rx="14" fill="#cdb963"/><rect y="2" width="62" height="57" rx="14" fill="#e6d77d"/><path d="M0 14Q0 0 14 0h34q14 0 14 14v22q-5 19-20 19H14Q0 55 0 42z" fill="#faef9c"/><path d="M11 22q4-18 7-8t1 6q4-8 6-2t6 1h21M10 30.500h42M10 41h22" fill="none" stroke="#d8c55f" stroke-width="3.400"/></svg>
      <!-- Freeform -->
      <svg class="size-[62px]" viewBox="0 0 62 62"><rect width="62" height="62" rx="14" fill="#fff"/><circle cx="25" cy="37" r="17.500" fill="#f0805f"/><rect x="21" y="8" width="33" height="33" rx="3" fill="#56c6ee" fill-opacity=".92"/><path d="M12 40c3-2 7-16 11-18 4 0-2 14 2 14 3 0 7-13 11-13 3 1-3 11 0 13 5 3 11-3 18-8" fill="none" stroke="#16364f" stroke-width="3.200" stroke-linecap="round"/></svg>
      <!-- Keynote -->
      <svg class="size-[62px] ml-0.5" viewBox="0 0 62 62"><rect width="62" height="62" rx="14" fill="url(#gKey)"/><path d="M15 9h32l3 16q.5 3-3 3H15q-3 0-3-3z" fill="#f5f5f5"/><circle cx="31" cy="16" r="6" fill="#62b25d"/><path d="M31 16V10a6 6 0 0 1 6 6z" fill="#e9a13b"/><path d="M31 16v-6a6 6 0 0 0-5.500 8z" fill="#7b5ea7"/><path d="M29.500 28h3l.5 22h6v3H23v-3h6z" fill="#e8e8e8"/></svg>
      <!-- Numbers -->
      <svg class="size-[62px]" viewBox="0 0 62 62"><rect width="62" height="62" rx="14" fill="#7ee05e"/><path d="M0 40h62v8q0 14-14 14H14Q0 62 0 48z" fill="#6bd44e"/><g fill="#f4f9f2"><rect x="11" y="40" width="8" height="13" rx="1.500"/><rect x="22" y="29" width="8" height="24" rx="1.500"/><rect x="33" y="9" width="7" height="44" rx="1.500"/><rect x="43.500" y="20" width="7.500" height="33" rx="1.500"/></g></svg>
      <!-- Pages -->
      <svg class="size-[62px]" viewBox="0 0 62 62"><rect width="62" height="62" rx="14" fill="url(#gOrange)"/><path d="M9 53l3-10 35-31q4-2 4 2L16 50z" fill="#f6f2ec"/><path d="M9 53l3-10 5 6z" fill="#8c7a66"/><path d="M20 52.500h32" stroke="#fbd6ae" stroke-width="1.600"/></svg>
      <!-- App Store -->
      <svg class="size-[62px]" viewBox="0 0 62 62"><rect width="62" height="62" rx="14" fill="url(#gBlue)"/><g fill="none" stroke="#fff" stroke-width="5" stroke-linecap="round"><path d="M34 14L20 39M28 14l20 35M11 39h24M44 39h7M16 46l-2 3"/></g></svg>
      <!-- System Settings -->
      <div class="relative size-[62px]"><svg class="size-[62px]" viewBox="0 0 62 62"><rect width="62" height="62" rx="14" fill="url(#gGrey)"/><circle cx="31" cy="31" r="24" fill="#4a4b4d"/><circle cx="31" cy="31" r="25" fill="none" stroke="#2e2f30" stroke-width="3.500" stroke-dasharray="2 1.600"/><circle cx="31" cy="31" r="19" fill="#7d8082"/><circle cx="31" cy="31" r="16.500" fill="#55585a"/><circle cx="31" cy="31" r="19" fill="none" stroke="#b5b8ba" stroke-width="1.500"/><path d="M31 31h19M31 31l-9.500-16.500M31 31l-9.500 16.500" stroke="#b5b8ba" stroke-width="3"/><circle cx="31" cy="31" r="5" fill="#8e9193" stroke="#333"/></svg>
        <div class="absolute -right-[8px] -top-[8px] w-[29px] h-[29px] rounded-full bg-[#e5523f] text-center text-[18px] leading-[29px] text-white font-['Inter',sans-serif]">1</div></div>
      <!-- WhatsApp -->
      <svg class="size-[62px]" viewBox="0 0 62 62"><rect width="62" height="62" rx="14" fill="#62d45c"/><path d="M7 54l3.500-12.500A24 24 0 1 1 20 51z" fill="#fff"/><path d="M12.500 48.500l2-8A19.500 19.500 0 1 1 21 46.500z" fill="#56cf50"/><path d="M22 20c2-3 4-2 5 0l2 5c0 2-3 3-2 5 2 4 5 6 8 8 3 0 3-4 5-3l5 3c2 2-1 7-5 8-10 0-21-12-20-20 0-3 1-4 2-6z" fill="#fff"/></svg>
      <div class="w-0.5 h-[70px] -mt-0.5 bg-[#2f2e27] ml-[9px] mr-[7px]"></div>
      <!-- Terminal -->
      <div class="relative size-[62px] rounded-[14px] border-2 border-[#9ba9ac] bg-black p-[4px]"><div class="w-full h-full rounded-[8px] bg-[#242424]"></div><svg class="absolute left-[9px] top-[9px] w-6 h-4" viewBox="0 0 24 16"><path d="M1 2l6 4-6 4M11 13h9" fill="none" stroke="#fff" stroke-width="2"/></svg></div>
      <!-- TextEdit -->
      <svg class="size-[62px] ml-0.5 overflow-visible" viewBox="0 0 62 62"><rect width="62" height="62" rx="14" fill="#fafafa"/><path d="M0 16h62M0 23.500h62M0 31h62M0 38.500h62M0 46h62M4 53.500h54" stroke="#c4c4c4" stroke-width="1.300"/><path d="M10 2v58" stroke="#efb6a8" stroke-width="1"/><path d="M53-5l6 1-25 55-10 15 5-18z" fill="#a9bccb"/><path d="M56-3L32 54" stroke="#5f7487" stroke-width="2"/></svg>
      <!-- VS Code -->
      <svg class="size-[62px]" viewBox="0 0 62 62"><rect width="62" height="62" rx="14" fill="#fff"/><path d="M9 22l4-3 31 25v8L9 25z" fill="#3578c4"/><path d="M9 40l4 3 31-25v-8L9 37z" fill="#2a62a8"/><path d="M41 9l11 5v34l-11 5z" fill="#4596e8"/></svg>
      <!-- Xcode -->
      <svg class="size-[62px] overflow-visible" viewBox="0 0 62 62"><rect width="62" height="62" rx="14" fill="url(#gBlue)"/><rect x="4" y="4" width="54" height="54" rx="11" fill="none" stroke="#9bcdf7" stroke-width="1.200"/><circle cx="31" cy="31" r="22" fill="none" stroke="#7fbaf5" stroke-width=".8"/><path d="M34 12L16 48M28 12l18 36M10 39h42" stroke="#a9d3fa" stroke-width="3.400" stroke-linecap="round"/><path d="M44 14L24 61" stroke="#26262a" stroke-width="7" stroke-linecap="round"/><path d="M35-4q14-4 20 5l4 6 6-2 4 8-6 3-6-6-8 6-6-3 2-9q-4-6-10-8z" fill="#4a4b50"/></svg>
      <svg class="size-[62px]"><use href="#leaf" width="62" height="62"/></svg>
      <svg class="size-[62px]"><use href="#books" width="62" height="62"/></svg>
      <svg class="size-[66px] -mt-0.5 -mx-0.5"><use href="#tabtile" width="66" height="66"/></svg>
      <svg class="size-[66px] -mt-0.5 -mx-0.5"><use href="#tabtile" width="66" height="66"/></svg>
      <svg class="size-[66px] -mt-0.5 ml-0 -mr-0.5"><use href="#tabtile" width="66" height="66"/></svg>
      <svg class="size-[66px] -mt-0.5 -mx-0.5"><use href="#tabtile" width="66" height="66"/></svg>
      <!-- Dictionary -->
      <div class="relative size-[62px]"><svg class="size-[62px] overflow-visible" viewBox="0 0 62 62"><path d="M5 56h14v11l-7-4-7 4z" fill="#c9483d"/><rect width="62" height="62" rx="14" fill="#7b2f30"/><rect x="2" width="60" height="60" rx="13" fill="#a84a4a"/></svg><div class="absolute inset-0 pl-0.5 text-center font-['Liberation_Serif',serif] text-[33px] leading-[60px] text-[#f5efef]">Aa</div></div>
      <div class="w-0.5 h-[70px] -mt-0.5 bg-[#3b3424] ml-[9px]"></div>

      <!-- Minimised windows and trash -->
      <svg class="w-[440px] h-[90px] -mt-[11px] ml-[47px]" viewBox="2920 2110 440 90">
        <use href="#books" x="2920.500" y="2163" width="23.500" height="23.500"/>
        <rect x="2954" y="2132" width="72" height="39" fill="#f7f8f8"/><path d="M2954 2134h13v3h-13zM2968 2137h8v2h-8z" fill="#2c6e55"/><path d="M2956 2142h8M2956 2146h9M2956 2150h6M2956 2154h9M2956 2158h7M2956 2162h9M2970 2143h50M2970 2150h50M2970 2157h50M2970 2164h30" stroke="#d3dbd8" stroke-width="1"/><path d="M2954 2171h50" stroke="#34465a" stroke-width="2"/>
        <use href="#leaf" x="3001" y="2163" width="23.500" height="23.500"/>
        <rect x="3033.500" y="2122.500" width="73" height="58" rx="3" fill="#161616" stroke="#a9adad"/><rect x="3037" y="2126" width="66" height="51" fill="#f4f4f4"/><path d="M3041 2129h58M3041 2132h50M3041 2135h54M3041 2138h40M3041 2141h56" stroke="#999" stroke-width="1" stroke-dasharray="7 9 4 6"/><path d="M3038 2145h64M3038 2148h64M3038 2151h60M3038 2154h64M3038 2157h64M3038 2160h62M3038 2163h64M3038 2166h58M3038 2169h64M3038 2172h64" stroke="#888" stroke-width="1.400" stroke-dasharray="5 1 8 1"/>
        <rect x="3112.500" y="2127.500" width="74" height="48" rx="3" fill="#161616" stroke="#a9adad"/><rect x="3116" y="2131" width="67" height="41" fill="#fafafa"/><path d="M3117 2133h40M3117 2136h20M3117 2140h18M3117 2143h60M3117 2146h52M3117 2150h14M3150 2150h30M3117 2153h12M3150 2153h26M3117 2156h50M3117 2159h34" stroke="#8a8a8a" stroke-width="1.200" stroke-dasharray="6 1 3 1"/>
        <rect x="3196" y="2131" width="72" height="42" fill="#f3f5f5"/><path d="M3221 2138h22l8 4h12l-5 12-5 10-10-2-8 4-8-8-5-8z" fill="#d8dadb"/><path d="M3226 2148h12v10l-10-2z" fill="#6aa0cc"/><path d="M3232 2153h8v9l-6-4z" fill="#f0a45c"/><path d="M3239 2149h12l-3 8h-8z" fill="#8db8da"/><path d="M3196 2138h12M3218 2133h6" stroke="#49b69a" stroke-width="2"/><path d="M3207 2141v30" stroke="#d7dbdb"/><path d="M3208 2148h4v8h-4z" fill="#57bd9b"/>
        <use href="#tabtile" x="3242" y="2162" width="25" height="25"/>
        <path d="M3285 2121h54l-5 58q-1 7-8 7h-28q-7 0-8-7z" fill="url(#gTrash)"/><ellipse cx="3312" cy="2124" rx="26.500" ry="6" fill="#bdbdbd"/><path d="M3290 2125l8-7 5 4 4-6 8 6 6-7 4 7 6-3 3 6-14 6h-18z" fill="#e8e8e8"/><path d="M3297 2122l5-4 3 8zM3315 2118l6 3-4 6zM3326 2124l5-3v5z" fill="#555"/><path d="M3305 2123l3 5-5 1zM3320 2122l4 4-5 2z" fill="#4d7eae"/><path d="M3294 2134l3 44M3304 2140l-2 40M3315 2136l4 44M3330 2134l-5 44" stroke="#fff" stroke-opacity=".6" stroke-width="2" fill="none"/>
      </svg>
    </div>
    <!-- Running indicators -->
    <svg class="absolute left-0 top-[82px] w-[3200px] h-[12px]" viewBox="64 2190 3200 12" fill="#000"><circle cx="108" cy="2196" r="4"/><circle cx="268" cy="2196" r="4"/><circle cx="350" cy="2196" r="4"/><circle cx="510" cy="2196" r="4"/><circle cx="670" cy="2196" r="4"/><circle cx="1232" cy="2196" r="4"/><circle cx="1312" cy="2196" r="4"/><circle cx="1990" cy="2196" r="4"/><circle cx="2072" cy="2196" r="4"/><circle cx="2152" cy="2196" r="4"/><circle cx="2232" cy="2196" r="4"/><circle cx="2312" cy="2196" r="4"/><circle cx="2392" cy="2196" r="4"/><circle cx="2472" cy="2196" r="4"/><circle cx="2552" cy="2196" r="4"/><circle cx="2634" cy="2196" r="4"/><circle cx="2714" cy="2196" r="4"/><circle cx="2794" cy="2196" r="4"/></svg>
  </div>
</div>
</body>
</html>
